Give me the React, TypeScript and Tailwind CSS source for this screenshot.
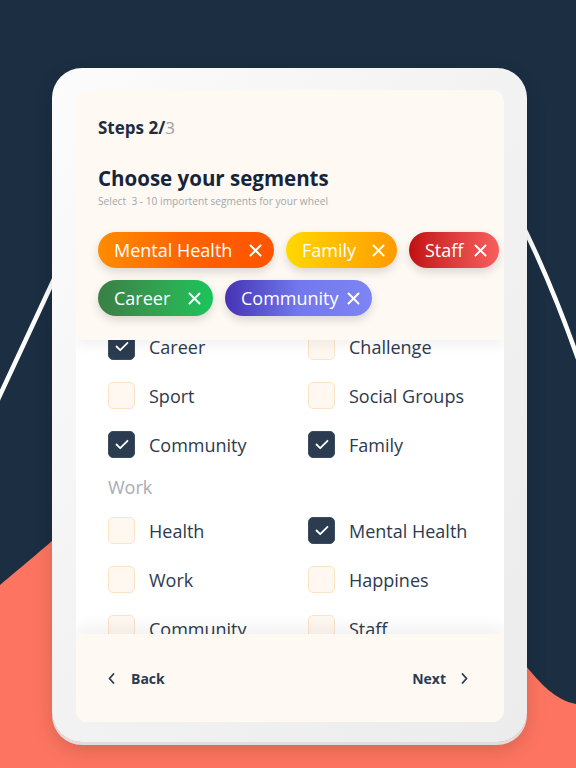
interface Chip {
  label: string;
  width: string;
  gradient: string;
}

interface Item {
  label: string;
  checked: boolean;
}

const chips: Chip[] = [
  { label: "Mental Health", width: "w-[176px]", gradient: "bg-gradient-to-r from-[#ff8c00] via-[#ff6200] to-[#ff5400]" },
  { label: "Family", width: "w-[111px]", gradient: "bg-gradient-to-r from-[#ffd800] to-[#ff9a00]" },
  { label: "Staff", width: "w-[90px]", gradient: "bg-gradient-to-r from-[#c10c10] to-[#f85e5e]" },
  { label: "Career", width: "w-[115px]", gradient: "bg-gradient-to-r from-[#3a7f45] to-[#17c45c]" },
  { label: "Community", width: "w-[147px]", gradient: "bg-gradient-to-r from-[#4631b4] via-[#7378ec] to-[#7d84f3]" },
];

const groupOne: Item[][] = [
  [{ label: "Career", checked: true }, { label: "Challenge", checked: false }],
  [{ label: "Sport", checked: false }, { label: "Social Groups", checked: false }],
  [{ label: "Community", checked: true }, { label: "Family", checked: true }],
];

const groupWork: Item[][] = [
  [{ label: "Health", checked: false }, { label: "Mental Health", checked: true }],
  [{ label: "Work", checked: false }, { label: "Happines", checked: false }],
  [{ label: "Community", checked: false }, { label: "Staff", checked: false }],
];

function Checkbox({ checked }: { checked: boolean }) {
  if (checked) {
    return (
      <div className="w-[27px] h-[27px] rounded-[5px] bg-[#2b3c51] border border-[#3c4d61] flex items-center justify-center">
        <svg width="14" height="11" viewBox="0 0 14 11" fill="none">
          <path d="M1.5 5.5 L5.2 9.2 L12.5 1.8" stroke="white" strokeWidth="1.8" strokeLinecap="round" strokeLinejoin="round" />
        </svg>
      </div>
    );
  }
  return <div className="w-[27px] h-[27px] rounded-[5px] bg-[#fff8f0] border-[1.5px] border-[#fde3c6]" />;
}

function Row({ items }: { items: Item[] }) {
  return (
    <div className="grid grid-cols-[200px_200px] h-[49px]">
      {items.map((it, i) => (
        <div key={i} className="flex items-center">
          <Checkbox checked={it.checked} />
          <span className="ml-[14px] text-[18px] text-[#2d3a4e] leading-none">{it.label}</span>
        </div>
      ))}
    </div>
  );
}

export default function App() {
  return (
    <div className="relative w-[576px] h-[768px] overflow-hidden bg-[#1b2e42] font-['Open_Sans',sans-serif]">
      {/* Background Shapes */}
      <svg className="absolute inset-0" width="576" height="768" viewBox="0 0 576 768">
        <path d="M0 585 C 20 568, 40 552, 70 525 L 505 640 C 515 650, 522 660, 526 666 C 540 683, 555 700, 576 704 L 576 768 L 0 768 Z" fill="#fd7560" />
        <path d="M-6 408 Q 28 335 62 262" stroke="white" strokeWidth="4.5" fill="none" />
        <path d="M516 212 Q 552 282 584 376" stroke="white" strokeWidth="4.5" fill="none" />
      </svg>

      <div className="relative z-10 pt-[68px] pl-[52px]">
        {/* Device */}
        <div className="w-[475px] h-[674px] rounded-[30px] bg-gradient-to-br from-[#fcfcfc] via-[#f2f2f2] to-[#ececec] shadow-[0_3px_0_#dedede,0_8px_20px_rgba(0,0,0,0.15)] pt-[22px] pl-[24px] pr-[23px] pb-[20px]">
          <div className="h-full rounded-[12px] overflow-hidden flex flex-col bg-white">

            {/* Header */}
            <div className="relative z-10 h-[250px] shrink-0 bg-[#fef9f3] pt-[26px] pl-[22px] shadow-[0_5px_12px_rgba(0,0,0,0.06)]">
              <div className="text-[17px] leading-[24px] font-bold text-[#1f2d40]">
                Steps 2/<span className="font-normal text-[#9aa0a8]">3</span>
              </div>
              <h1 className="mt-[24px] text-[20.5px] leading-[28px] font-bold text-[#16253a]">Choose your segments</h1>
              <p className="mt-[2px] text-[10.2px] leading-[14px] text-[#a3a7ad] whitespace-pre">Select  3 - 10 importent segments for your wheel</p>

              <div className="mt-[24px] flex flex-wrap gap-3">
                {chips.map((c) => (
                  <div
                    key={c.label}
                    className={`${c.width} ${c.gradient} h-[36px] rounded-full pl-4 pr-3 flex items-center justify-between text-white text-[18px] shadow-[0_4px_10px_rgba(0,0,0,0.14)]`}
                  >
                    <span className="leading-none">{c.label}</span>
                    <svg width="13" height="13" viewBox="0 0 13 13" fill="none">
                      <path d="M1.5 1.5 L11.5 11.5 M11.5 1.5 L1.5 11.5" stroke="white" strokeWidth="2" strokeLinecap="round" />
                    </svg>
                  </div>
                ))}
              </div>
            </div>

            {/* Segment list */}
            <div className="h-[294px] shrink-0 overflow-hidden bg-white">
              <div className="-mt-[18px] pl-8">
                {groupOne.map((r, i) => (
                  <Row key={i} items={r} />
                ))}
                <div className="h-[37px] flex items-center text-[18px] text-[#a6acb4]">Work</div>
                {groupWork.map((r, i) => (
                  <Row key={i} items={r} />
                ))}
              </div>
            </div>

            {/* Footer */}
            <div className="relative z-10 flex-1 bg-[#fef9f3] shadow-[0_-8px_14px_rgba(0,0,0,0.05)] flex items-center justify-between pl-8 pr-[36px]">
              <button className="flex items-center gap-4 text-[14px] font-bold text-[#2b3b50]">
                <svg width="7" height="11" viewBox="0 0 7 11" fill="none">
                  <path d="M5.5 1 L1.5 5.5 L5.5 10" stroke="#2b3b50" strokeWidth="1.8" strokeLinecap="round" strokeLinejoin="round" />
                </svg>
                Back
              </button>
              <button className="flex items-center gap-[15px] text-[14px] font-bold text-[#2b3b50]">
                Next
                <svg width="7" height="11" viewBox="0 0 7 11" fill="none">
                  <path d="M1.5 1 L5.5 5.5 L1.5 10" stroke="#2b3b50" strokeWidth="1.8" strokeLinecap="round" strokeLinejoin="round" />
                </svg>
              </button>
            </div>

          </div>
        </div>
      </div>
    </div>
  );
}
